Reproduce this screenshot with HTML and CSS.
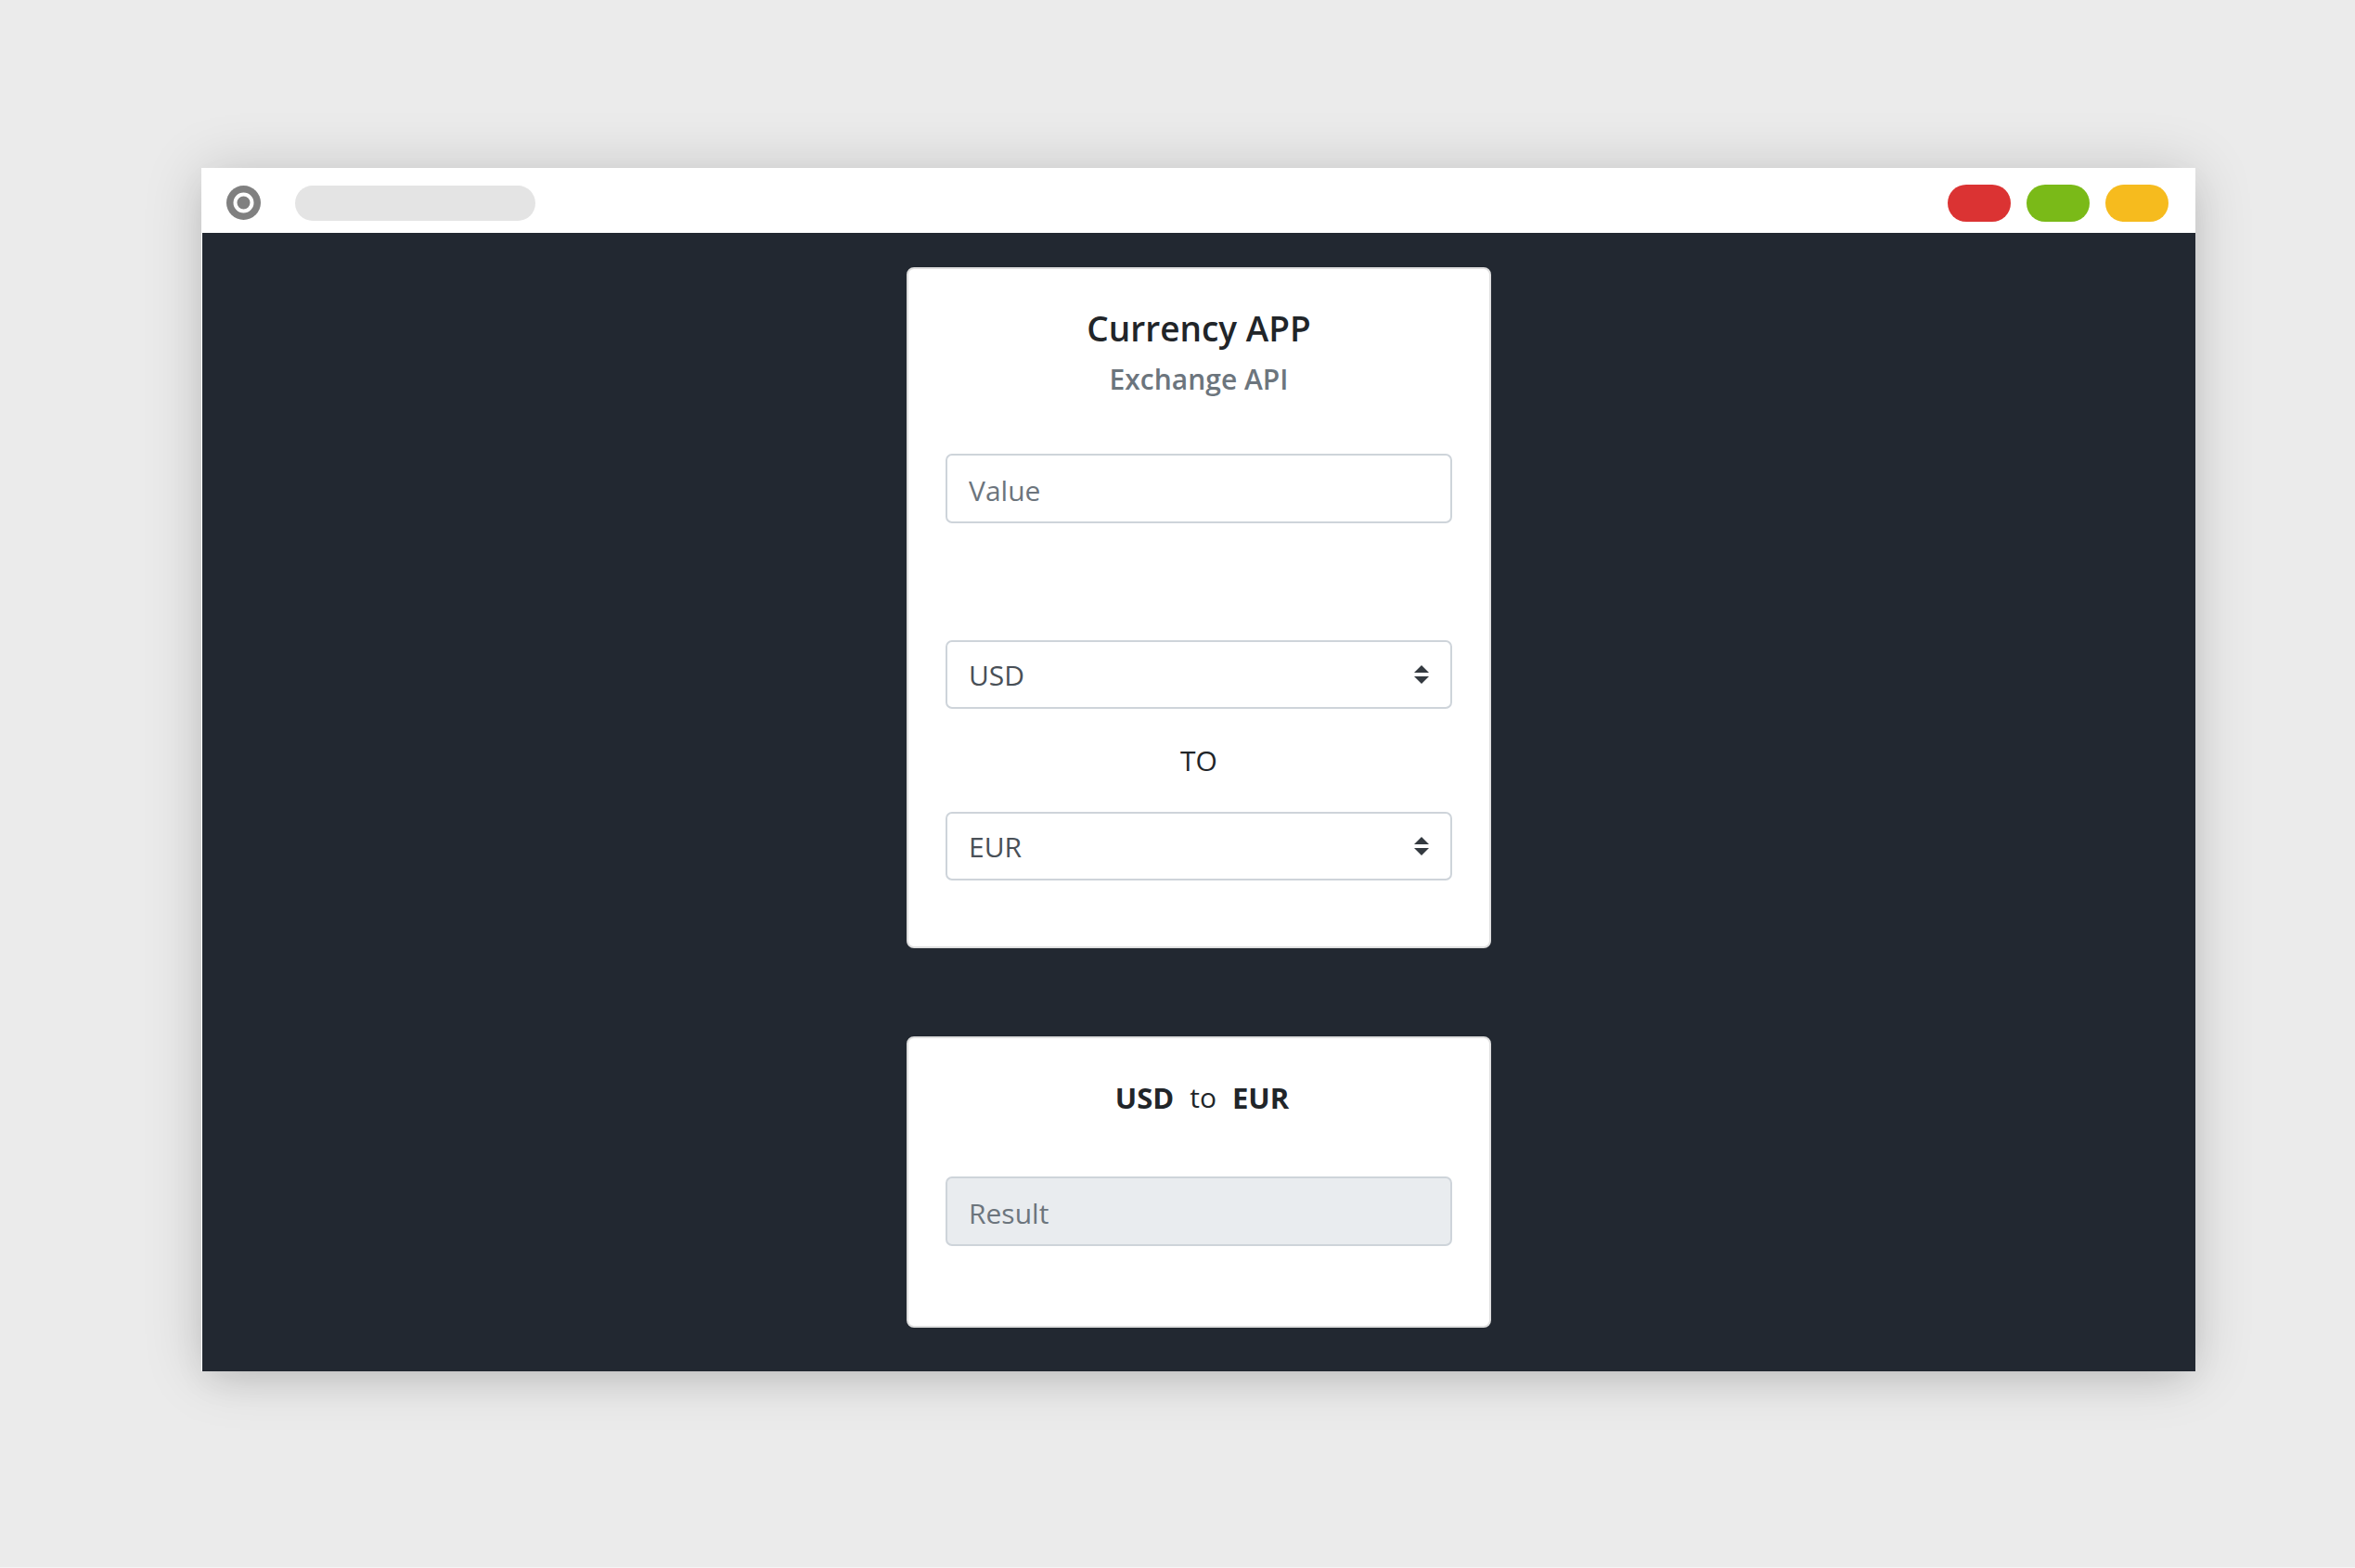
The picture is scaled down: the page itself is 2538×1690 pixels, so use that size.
FILE: index.html
```html
<!DOCTYPE html>
<html lang="en">
<head>
<meta charset="utf-8">
<meta name="viewport" content="width=device-width, initial-scale=1">
<title>Currency APP</title>
<link rel="stylesheet" href="styles.css">
</head>
<body>
<div class="window">
  <header class="titlebar">
    <svg class="logo" viewBox="0 0 37 37" aria-hidden="true">
      <circle cx="18.5" cy="18.5" r="18.5" fill="#808080"/>
      <circle cx="18.5" cy="18.5" r="9" fill="none" stroke="#fff" stroke-width="4"/>
    </svg>
    <div class="address"></div>
    <div class="controls">
      <button class="control control-red" type="button" aria-label="Close"></button>
      <button class="control control-green" type="button" aria-label="Maximize"></button>
      <button class="control control-yellow" type="button" aria-label="Minimize"></button>
    </div>
  </header>
  <main class="app">
    <form class="card card-form">
      <h1 class="title">Currency APP</h1>
      <h2 class="subtitle">Exchange API</h2>
      <input class="field" type="text" placeholder="Value" aria-label="Value">
      <select class="field select select-from" aria-label="From currency">
        <option selected>USD</option>
        <option>EUR</option>
      </select>
      <p class="line">TO</p>
      <select class="field select" aria-label="To currency">
        <option>USD</option>
        <option selected>EUR</option>
      </select>
    </form>
    <section class="card card-result">
      <p class="line pair"><strong>USD</strong><span>to</span><strong>EUR</strong></p>
      <input class="field field-readonly" type="text" placeholder="Result" aria-label="Result" readonly>
    </section>
  </main>
</div>
</body>
</html>
```
FILE: styles.css
```css
* {
  box-sizing: border-box;
}

body {
  margin: 0;
  min-height: 100vh;
  padding: 181px 172px 210px 217px;
  background: #ebebeb;
  border-bottom: 1px solid #f5f5f5;
  color: #212529;
  font-family: "Open Sans", "Noto Sans", sans-serif;
  font-size: 30px;
  line-height: 44px;
}

.window {
  background: #fff;
  box-shadow: 0 2px 60px rgba(0, 0, 0, 0.16), 0 14px 36px -8px rgba(0, 0, 0, 0.1);
}

.titlebar {
  display: flex;
  align-items: center;
  height: 70px;
  padding: 5px 29px 0 27px;
}

.logo {
  width: 37px;
  height: 37px;
}

.address {
  width: 259px;
  height: 38px;
  margin-left: 37px;
  border-radius: 19px;
  background: #e4e4e4;
}

.controls {
  display: flex;
  gap: 17px;
  margin-left: auto;
}

.control {
  width: 68px;
  height: 40px;
  padding: 0;
  border: 0;
  border-radius: 20px;
}

.control-red {
  background: #db3333;
}

.control-green {
  background: #7aba18;
}

.control-yellow {
  background: #f6bb1e;
}

.app {
  display: flex;
  flex-direction: column;
  align-items: center;
  gap: 95px;
  margin-left: 1px;
  padding: 37px 16px 47px;
  background: #222831;
}

.card {
  display: flex;
  flex-direction: column;
  width: 100%;
  max-width: 630px;
  padding: 40px;
  border: 2px solid #dfdfdf;
  border-radius: 8px;
  background: #fff;
  text-align: center;
}

.card-form {
  padding-bottom: 71px;
}

.card-result {
  padding-bottom: 86px;
}

.title {
  margin: 0 0 11px;
  font-size: 37px;
  font-weight: 600;
  line-height: 48px;
}

.subtitle {
  margin: 0 0 60px;
  color: #6c757d;
  font-size: 30px;
  font-weight: 600;
  line-height: 40px;
}

.field {
  width: 100%;
  height: 75px;
  margin: 0;
  padding: 3px 23px 0;
  border: 2px solid #ced4da;
  border-radius: 7px;
  background-color: #fff;
  color: #495057;
  font: inherit;
}

.field::placeholder {
  color: #6c757d;
  opacity: 1;
}

.field-readonly {
  background-color: #e9ecef;
}

.select {
  height: 74px;
  padding-top: 2px;
  appearance: none;
  background-image: url("data:image/svg+xml,%3Csvg xmlns='http://www.w3.org/2000/svg' viewBox='0 0 4 5'%3E%3Cpath fill='%23343a40' d='M2 0L0 2h4zm0 5L0 3h4z'/%3E%3C/svg%3E");
  background-repeat: no-repeat;
  background-position: right 23px center;
  background-size: 16px 20px;
}

.select-from {
  margin-top: 126px;
}

.line {
  margin: 34px 0 33px;
}

.pair {
  display: flex;
  justify-content: center;
  gap: 17px;
  margin: 0 0 63px;
  padding: 2px 0 0 7px;
  font-size: 31px;
}

.pair span {
  font-size: 30px;
}
```
